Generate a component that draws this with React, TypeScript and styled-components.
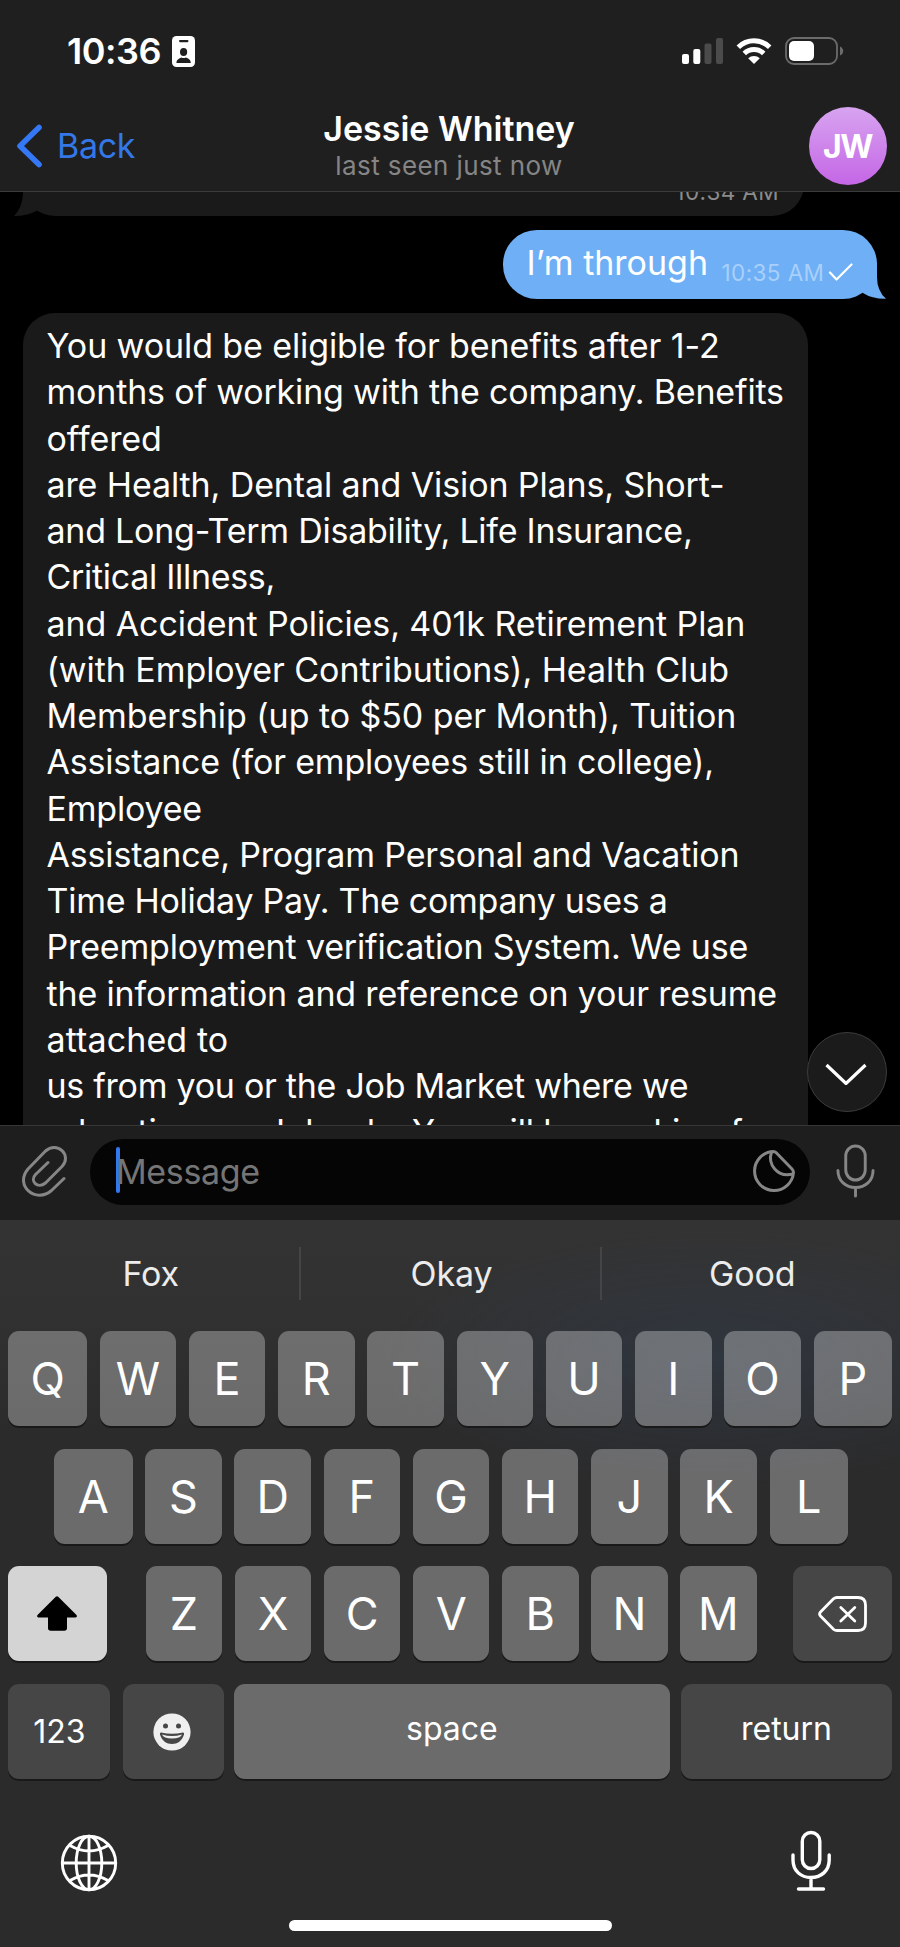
import React from "react";
import styled, { createGlobalStyle } from "styled-components";

const GlobalStyle = createGlobalStyle`
  * { box-sizing: border-box; }
  body { margin: 0; background: #000; }
  svg { flex: none; display: block; }
`;

const Screen = styled.div`
  width: 900px;
  height: 1947px;
  display: flex;
  flex-direction: column;
  overflow: hidden;
  background: #000;
  color: #fff;
  font-family: Inter, "Liberation Sans", sans-serif;
  font-size: 34px;
  white-space: nowrap;
`;

const Header = styled.header`
  flex: none;
  height: 192px;
  background: #1f1f1f;
  border-bottom: 1px solid #3a3a3a;
`;

const StatusBar = styled.div`
  height: 102px;
  display: flex;
  align-items: center;
  padding: 0 56px 0 67px;
`;

const Clock = styled.div`
  font-size: 36px;
  font-weight: 600;
  width: 105px;
  letter-spacing: -0.45px;
`;

const StatusIcons = styled.div`
  margin-left: auto;
  display: flex;
  gap: 13px;
  height: 28px;
`;

const NavBar = styled.div`
  height: 87px;
  display: grid;
  grid-template-columns: 200px 1fr 200px;
  align-items: center;
  padding: 0 13px 0 15px;
`;

const BackButton = styled.div`
  display: flex;
  align-items: center;
  gap: 14px;
  color: #3478e8;
  letter-spacing: -0.3px;
`;

const TitleBlock = styled.div`
  display: flex;
  flex-direction: column;
  align-items: center;
  padding: 3px 4px 0 0;
`;

const Title = styled.div`
  font-weight: 600;
  line-height: 38px;
`;

const Subtitle = styled.div`
  font-size: 26px;
  line-height: 36px;
  color: #858585;
  letter-spacing: 0.4px;
`;

const Avatar = styled.div`
  justify-self: end;
  width: 78px;
  height: 78px;
  border-radius: 50%;
  background: linear-gradient(#d7a4f0, #c566e6);
  display: flex;
  align-items: center;
  justify-content: center;
  font-size: 32px;
  font-weight: 700;
  letter-spacing: -1.5px;
  padding: 2px 1px 0 0;
`;

const Chat = styled.main`
  position: relative;
  flex: none;
  height: 933px;
  overflow: hidden;
  display: flex;
  flex-direction: column;
`;

const PreviousBubble = styled.div`
  position: relative;
  isolation: isolate;
  flex: none;
  margin: -46px 0 0 23px;
  width: 781px;
  height: 70px;
  border-radius: 32px;
  background: #1a1a1a;
  display: flex;
  justify-content: flex-end;
  padding: 34px 25px 0 0;
`;

const Tail = styled.svg<{ $side: "left" | "right" }>`
  position: absolute;
  z-index: -1;
  bottom: 0;
  ${(p) => p.$side}: -9px;
`;

const Stamp = styled.span<{ $color: string }>`
  font-size: 22.5px;
  line-height: 24px;
  letter-spacing: 0.4px;
  color: ${(p) => p.$color};
`;

const SentBubble = styled.div`
  position: relative;
  isolation: isolate;
  flex: none;
  align-self: flex-end;
  margin: 14px 23px 14px 0;
  width: 374.5px;
  height: 69px;
  border-radius: 34px;
  background: #6eaff5;
  display: flex;
  padding: 0 20px 0 24px;
`;

const SentText = styled.span`
  line-height: 65px;
  width: 195px;
`;

const SentMeta = styled.span`
  display: flex;
  align-items: flex-start;
  gap: 4px;
  padding-top: 31px;
`;

const ReceivedBubble = styled.div`
  flex: none;
  margin-left: 23px;
  width: 785px;
  height: 1000px;
  border-radius: 32px 32px 0 0;
  background: #1a1a1a;
  padding: 10px 0 0 23.5px;
`;

const Line = styled.div<{ $tracking: number }>`
  height: 46.25px;
  line-height: 46.25px;
  letter-spacing: ${(p) => p.$tracking}px;
`;

const ScrollDown = styled.div`
  position: absolute;
  right: 13px;
  top: 840px;
  width: 80px;
  height: 80px;
  border-radius: 50%;
  background: #1b1b1b;
  border: 1px solid #3c3c3c;
  display: flex;
  align-items: center;
  justify-content: center;
  padding-right: 2px;
`;

const Composer = styled.div`
  flex: none;
  height: 94.5px;
  display: flex;
  align-items: center;
  background: #1e1e1e;
  border-top: 1px solid #363636;
  padding: 0 25px 3px 22px;
`;

const Field = styled.div`
  display: flex;
  align-items: center;
  width: 720px;
  height: 66px;
  margin: 2px 26px 0 22px;
  border-radius: 33px;
  background: #050505;
  padding: 0 15px 2px 26px;
`;

const Caret = styled.div`
  width: 4px;
  height: 46px;
  border-radius: 2px;
  background: #3478f0;
  margin-top: -2px;
`;

const Placeholder = styled.div`
  flex: 1;
  color: #757575;
  margin: 0 0 0 -4px;
  letter-spacing: -0.35px;
`;

const Keyboard = styled.section`
  flex: 1;
  display: flex;
  flex-direction: column;
  background:
    radial-gradient(ellipse 330px 130px at 710px 140px, rgba(48, 66, 92, 0.34), rgba(48, 66, 92, 0) 100%),
    linear-gradient(#333333 0, #313131 90px, #2b2b2b 210px);
`;

const Suggestions = styled.div`
  display: grid;
  grid-template-columns: 300.5px 301px 298.5px;
  height: 111.5px;
  padding-top: 27px;
`;

const Suggestion = styled.div`
  height: 53px;
  line-height: 53px;
  padding-left: 3px;
  text-align: center;
  color: #ececec;
  letter-spacing: -0.1px;
  &:not(:last-child) { border-right: 2px solid #444546; }
`;

const Rows = styled.div`
  display: flex;
  flex-direction: column;
  gap: 22.7px;
`;

const KeyRow = styled.div<{ $left?: number; $right?: number }>`
  display: flex;
  justify-content: space-between;
  padding: 0 ${(p) => p.$right ?? 8}px 0 ${(p) => p.$left ?? 8.4}px;
`;

const LetterGroup = styled.div`
  display: flex;
  justify-content: space-between;
  width: 611px;
  margin-left: 2px;
`;

const Key = styled.div<{
  $w: number;
  $tone?: "light" | "dark" | "active";
  $size?: number;
  $lift?: number;
  $nudge?: number;
}>`
  width: ${(p) => p.$w}px;
  height: 95px;
  margin: 0 ${(p) => -(p.$nudge ?? 0)}px 0 ${(p) => p.$nudge ?? 0}px;
  border-radius: 11px;
  background: ${(p) =>
    p.$tone === "dark" ? "#464646" : p.$tone === "active" ? "#d4d4d4" : "rgba(255, 255, 255, 0.3)"};
  box-shadow: 0 2px 0 #191919;
  display: flex;
  align-items: center;
  justify-content: center;
  font-size: ${(p) => p.$size ?? 45}px;
  padding-bottom: ${(p) => p.$lift ?? 0}px;
`;

const BottomBar = styled.div`
  height: 168px;
  padding: 51px 68px 0 60px;
  display: flex;
  justify-content: space-between;
  align-items: flex-start;
  position: relative;
`;

const GlobeButton = styled.div`
  padding-top: 4px;
`;

const HomeIndicator = styled.div`
  position: absolute;
  left: 289px;
  bottom: 16.5px;
  width: 322.5px;
  height: 11px;
  border-radius: 6px;
  background: #fff;
`;

const BadgeIcon = () => (
  <svg width="23" height="31" viewBox="0 0 23 31">
    <rect width="23" height="31" rx="4.5" fill="#fff" />
    <rect x="7" y="4" width="9.5" height="2.2" rx="1.1" fill="#1f1f1f" />
    <ellipse cx="11.6" cy="16" rx="3.6" ry="4" fill="#1f1f1f" />
    <path d="M4.4 27c0-4 4-5 5-5.600q2.200 1 4.400 0c1.500.600 5 1.600 5 5.600z" fill="#1f1f1f" />
  </svg>
);

const SignalIcon = () => (
  <svg width="41" height="28" viewBox="0 0 41 28">
    <rect x="0" y="17" width="7" height="10" rx="2" fill="#fff" />
    <rect x="11.300" y="12" width="7" height="15" rx="2" fill="#fff" />
    <rect x="22.500" y="6.500" width="7" height="20.500" rx="2" fill="#4b4b4b" />
    <rect x="34" y="1" width="7" height="26" rx="2" fill="#4b4b4b" />
  </svg>
);

const WifiIcon = () => (
  <svg width="36" height="28" viewBox="0 0 36 28">
    <g fill="none" stroke="#fff" strokeWidth="5">
      <path d="M2.300 10.200a22.500 22.500 0 0 1 31.400 0" />
      <path d="M8.300 16.500a14 14 0 0 1 19.400 0" />
    </g>
    <path d="M12.200 21.200a8.400 8.400 0 0 1 11.600 0L18 27z" fill="#fff" />
  </svg>
);

const BatteryIcon = () => (
  <svg width="59" height="28" viewBox="0 0 59 28">
    <rect x="1" y="1" width="51" height="26" rx="8" fill="none" stroke="#6b6b6b" strokeWidth="1.800" />
    <rect x="4" y="4" width="25" height="20" rx="5" fill="#fff" />
    <path d="M55 9.500q3.200 1.500 3.200 4.500t-3.200 4.500z" fill="#6b6b6b" />
  </svg>
);

const ClipIcon = () => (
  <svg width="46" height="52" viewBox="0 0 46 52" fill="none" stroke="#868686" strokeWidth="3" strokeLinecap="round" strokeLinejoin="round">
    <path d="M42 33.500L29.500 45.500C14 59-8 41 6 24L23.500 6C35-4 50.500 10 40 21.500L23.500 38C15.500 44.500 7.500 36 13.500 29.500L26 17.500" />
  </svg>
);

const StickerIcon = () => (
  <svg width="42" height="42" viewBox="0 0 42 42" fill="none" stroke="#868686" strokeWidth="3" strokeLinejoin="round">
    <path d="M20.500 1.500A19.500 19.500 0 1 0 40.500 22.500Q40.500 20.500 39 19L24 3.500Q22.500 1.500 20.500 1.500z" />
    <path d="M18.500 2C14.500 14 24 28 40 24" />
  </svg>
);

const MicIcon = () => (
  <svg width="39" height="54" viewBox="0 0 40 54" preserveAspectRatio="none" fill="none" stroke="#868686" strokeWidth="3" strokeLinecap="round">
    <rect x="10" y="2" width="20" height="34" rx="10" />
    <path d="M2 26.500C2 37 10 43.500 20 43.500S38 37 38 26.500M20 44v8" />
  </svg>
);

const DeleteIcon = () => (
  <svg width="49" height="36" viewBox="0 0 49 36" fill="none" stroke="#fff" strokeWidth="2.800" strokeLinecap="round" strokeLinejoin="round">
    <path d="M19 1.500H40Q47.500 1.500 47.500 9V27Q47.500 34.500 40 34.500H19Q17 34.500 15.500 33.200L2.500 20Q0.700 18 2.500 16L15.500 2.800Q17 1.500 19 1.500z" />
    <path d="M22.800 11.500l14 13.500M36.800 11.500l-14 13.500" />
  </svg>
);

const ShiftIcon = () => (
  <svg width="41" height="35" viewBox="0 0 41 35">
    <path d="M18.800.8q1.200-1.100 2.400 0L39.500 19q1.200 2.200-1 2.500H30V32q0 2.700-2.700 2.700H13.700Q11 34.700 11 32V21.500H1.500Q-.700 21.200.5 19z" fill="#000" />
  </svg>
);

const SmileIcon = () => (
  <svg width="40" height="38" viewBox="0 0 40 38">
    <circle cx="19" cy="19" r="18.600" fill="#efefef" />
    <circle cx="12.500" cy="13" r="2.500" fill="#464646" />
    <circle cx="25.500" cy="13" r="2.500" fill="#464646" />
    <path d="M8 19.500Q19 22 30 19.500 31.500 19.500 31 21.500C29 28 24.500 31 19 31S9 28 7 21.500Q6.500 19.500 8 19.500z" fill="#464646" />
    <path d="M9 21.500Q19 24.500 29 21.500 27.500 25.500 19 25.500T9 21.500z" fill="#efefef" />
  </svg>
);

const GlobeIcon = () => (
  <svg width="58" height="58" viewBox="0 0 58 58" fill="none" stroke="#fff" strokeWidth="2.900">
    <circle cx="29" cy="29" r="26.700" />
    <ellipse cx="29" cy="29" rx="12.800" ry="26.700" />
    <path d="M29 2v54M2 29h54M10 11.500Q29 22.500 48 11.500M10 46.500Q29 35.500 48 46.500" />
  </svg>
);

const DictateIcon = () => (
  <svg width="42" height="62" viewBox="0 0 42 62" fill="none" stroke="#fff" strokeWidth="3.400" strokeLinecap="round">
    <rect x="12.300" y="2.500" width="17.500" height="36" rx="8.750" />
    <path d="M3 25v5C3 41 11 47.500 21 47.500S39.200 41 39.200 30v-5M21 48v11M8.500 59h25" />
  </svg>
);

const message: [string, number][] = [
  ["You would be eligible for benefits after 1-2", -0.1],
  ["months of working with the company. Benefits", -0.18],
  ["offered", -0.1],
  ["are Health, Dental and Vision Plans, Short-", -0.11],
  ["and Long-Term Disability, Life Insurance,", -0.24],
  ["Critical Illness,", -0.3],
  ["and Accident Policies, 401k Retirement Plan", -0.08],
  ["(with Employer Contributions), Health Club", -0.07],
  ["Membership (up to $50 per Month), Tuition", -0.06],
  ["Assistance (for employees still in college),", -0.18],
  ["Employee", -0.2],
  ["Assistance, Program Personal and Vacation", -0.16],
  ["Time Holiday Pay. The company uses a", -0.27],
  ["Preemployment verification System. We use", -0.16],
  ["the information and reference on your resume", -0.16],
  ["attached to", 0.1],
  ["us from you or the Job Market where we", -0.27],
  ["advertise our Job ads. You will be working for", -0.14],
];

const edgeWidth = (i: number, n: number) => (i === 0 || i === n - 1 ? 78.5 : 76.5);

const letters = (row: string) =>
  row.split("").map((c, i) => (
    <Key key={c} $w={edgeWidth(i, row.length)}>{c}</Key>
  ));

export default function App() {
  return (
    <>
      <GlobalStyle />
      <Screen>
        <Header>
          <StatusBar>
            <Clock>10:36</Clock>
            <BadgeIcon />
            <StatusIcons>
              <SignalIcon />
              <WifiIcon />
              <BatteryIcon />
            </StatusIcons>
          </StatusBar>
          <NavBar>
            <BackButton>
              <svg width="28" height="46" viewBox="0 0 28 46" fill="none" stroke="#3478f6" strokeWidth="5.600" strokeLinecap="round" strokeLinejoin="round">
                <path d="M24 4.500L5 23l19 18.500" />
              </svg>
              Back
            </BackButton>
            <TitleBlock>
              <Title>Jessie Whitney</Title>
              <Subtitle>last seen just now</Subtitle>
            </TitleBlock>
            <Avatar>JW</Avatar>
          </NavBar>
        </Header>
        <Chat>
          <PreviousBubble>
            <Tail $side="left" width="40" height="32" viewBox="0 0 40 32">
              <path d="M9 0V10Q8 24 0 32 14 32 24 26L40 20V0z" fill="#1a1a1a" />
            </Tail>
            <Stamp $color="#8b8b8b">10:34 AM</Stamp>
          </PreviousBubble>
          <SentBubble>
            <Tail $side="right" width="40" height="40" viewBox="0 0 40 40">
              <path d="M31 5V18Q31 32 40 39.800 26 40 17 34L0 20V5z" fill="#6eaff5" />
            </Tail>
            <SentText>I’m through</SentText>
            <SentMeta>
              <Stamp $color="#a9d0fb">10:35 AM</Stamp>
              <svg width="25" height="20" viewBox="0 0 25 20" fill="none" stroke="#fff" strokeWidth="2.200" strokeLinecap="round" strokeLinejoin="round">
                <path d="M2 11.500l6.500 7L23.500 3.500" />
              </svg>
            </SentMeta>
          </SentBubble>
          <ReceivedBubble>
            {message.map(([text, tracking]) => (
              <Line key={text} $tracking={tracking}>{text}</Line>
            ))}
          </ReceivedBubble>
          <ScrollDown>
            <svg width="42" height="26" viewBox="0 0 42 26" fill="none" stroke="#fff" strokeWidth="3.200">
              <path d="M1.500 6L21 24.500 40.500 6" />
            </svg>
          </ScrollDown>
        </Chat>
        <Composer>
          <ClipIcon />
          <Field>
            <Caret />
            <Placeholder>Message</Placeholder>
            <StickerIcon />
          </Field>
          <MicIcon />
        </Composer>
        <Keyboard>
          <Suggestions>
            <Suggestion>Fox</Suggestion>
            <Suggestion>Okay</Suggestion>
            <Suggestion>Good</Suggestion>
          </Suggestions>
          <Rows>
            <KeyRow>{letters("QWERTYUIOP")}</KeyRow>
            <KeyRow $left={54} $right={52}>{letters("ASDFGHJKL")}</KeyRow>
            <KeyRow>
              <Key $w={98.5} $tone="active"><ShiftIcon /></Key>
              <LetterGroup>
                {"ZXCVBNM".split("").map((c) => <Key key={c} $w={76.5}>{c}</Key>)}
              </LetterGroup>
              <Key $w={98.5} $tone="dark"><DeleteIcon /></Key>
            </KeyRow>
            <KeyRow>
              <Key $w={102} $tone="dark" $size={32}>123</Key>
              <Key $w={101} $tone="dark" $nudge={1}><SmileIcon /></Key>
              <Key $w={435.5} $size={32} $lift={6}>space</Key>
              <Key $w={211} $tone="dark" $size={32} $lift={6}>return</Key>
            </KeyRow>
          </Rows>
          <BottomBar>
            <GlobeButton><GlobeIcon /></GlobeButton>
            <DictateIcon />
            <HomeIndicator />
          </BottomBar>
        </Keyboard>
      </Screen>
    </>
  );
}
